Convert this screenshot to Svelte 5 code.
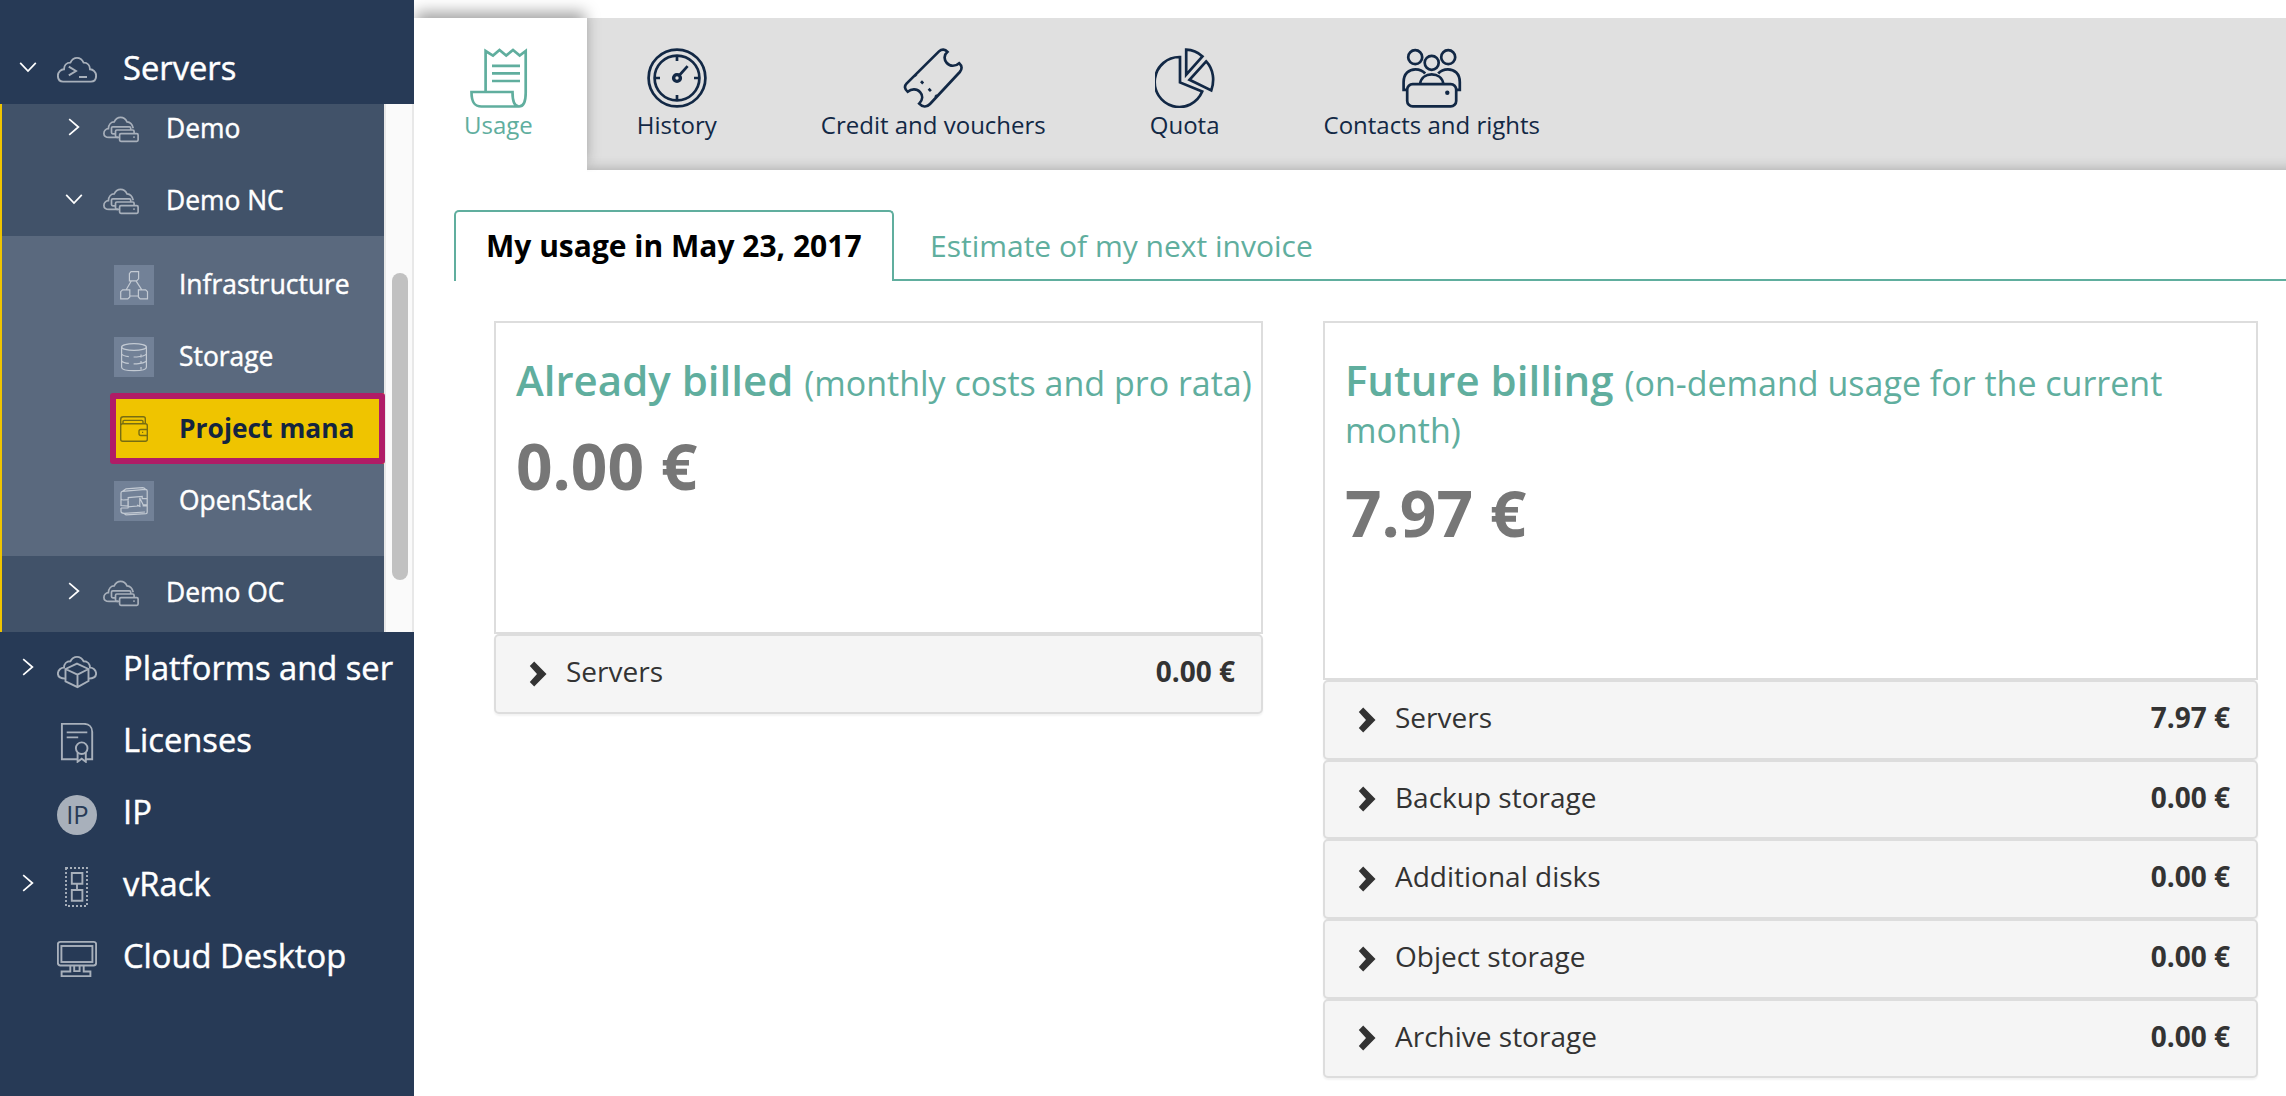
<script>
  const top = [{ label: 'Servers', icon: 'terminal', arrow: 'down' }];
  const bottom = [
    { label: 'Platforms and ser', icon: 'platform', arrow: 'right' },
    { label: 'Licenses', icon: 'license' },
    { label: 'IP', icon: 'ip' },
    { label: 'vRack', icon: 'vrack', arrow: 'right' },
    { label: 'Cloud Desktop', icon: 'desktop' }
  ];
  const before = [
    { label: 'Demo', arrow: 'right' },
    { label: 'Demo NC', arrow: 'down' }
  ];
  const after = [{ label: 'Demo OC', arrow: 'right' }];
  const project = [
    { label: 'Infrastructure', icon: 'infra' },
    { label: 'Storage', icon: 'storage' },
    { label: 'Project mana', icon: 'wallet', active: true },
    { label: 'OpenStack', icon: 'openstack' }
  ];
  const tools = [
    { label: 'Usage', icon: 'usage', active: true },
    { label: 'History', icon: 'history' },
    { label: 'Credit and vouchers', icon: 'ticket' },
    { label: 'Quota', icon: 'quota' },
    { label: 'Contacts and rights', icon: 'contacts' }
  ];
  const cards = [
    {
      title: 'Already billed', note: '(monthly costs and pro rata)', total: '0.00 €', size: 'narrow',
      rows: [['Servers', '0.00 €']]
    },
    {
      title: 'Future billing', note: '(on-demand usage for the current month)', total: '7.97 €', size: 'wide',
      rows: [
        ['Servers', '7.97 €'],
        ['Backup storage', '0.00 €'],
        ['Additional disks', '0.00 €'],
        ['Object storage', '0.00 €'],
        ['Archive storage', '0.00 €']
      ]
    }
  ];
</script>

{#snippet arrow(dir)}
  <svg class="arrow" viewBox="0 0 18 18">
    {#if dir === 'down'}
      <path d="M1.2 4.8 9 13 16.8 4.8" />
    {:else if dir === 'right'}
      <path d="M4.2 1.2 13.4 9 4.2 16.8" />
    {/if}
  </svg>
{/snippet}

{#snippet mainRow(item)}
  <div class="row main-row">
    {@render arrow(item.arrow)}
    <svg class="icon" viewBox="0 0 40 40">
      {#if item.icon === 'terminal'}
        <path d="M6 30.6C2.6 30.6.9 28 .9 24.8.9 21 4 18.2 7 18.2 7 14.6 9.4 11.6 13.4 11.6 15 8.4 17.4 6.9 20 6.9s5 1.5 6.6 4.7c4 0 6.4 3 6.4 6.6 3 0 6.1 2.8 6.1 6.6 0 3.2-1.7 5.8-5.1 5.8z" />
        <path d="M11.8 15.6 19 20l-7.2 4.4M22 26h8" />
      {:else if item.icon === 'platform'}
        <path d="M8.5 27.6C4 27.6.9 25.8.9 22.6.9 19 4 16.6 7 16.6 7 13 9.4 10.2 13.4 10.2 15 7.2 17.4 5.9 20 5.9s5 1.3 6.6 4.3c4 0 6.4 2.8 6.4 6.4 3 0 6.1 2.4 6.1 6 0 3.2-3.1 5-7.6 5" />
        <path d="M20 12.6 31.5 18v12l-11 6.2-12-5.8V18zM8.5 18l12 5.6 11-5.6M20.5 23.6v12.6" />
      {:else if item.icon === 'license'}
        <path d="M20.5 36.2H4.9V.9H27c5 0 8.2 3.2 8.2 8v27.3H29M9.7 9.4h20.6M9.7 14.4h11.5" />
        <circle cx="24.7" cy="25.2" r="5.8" />
        <path d="M20.6 29.6v9.2l4.1-3 4.1 3v-9.2" />
      {:else if item.icon === 'ip'}
        <circle class="disc" cx="20" cy="20" r="20" />
        <text x="20.4" y="29.3">IP</text>
      {:else if item.icon === 'vrack'}
        <rect class="dots" x="9" y="1" width="21" height="38" />
        <path d="M14.8 6h10.6v10.8H14.8zM14.8 23h10.6v10.8H14.8zM20 16.8V23" />
      {:else if item.icon === 'desktop'}
        <rect x=".9" y="2.9" width="38.2" height="23.6" rx="2.4" />
        <rect x="4.4" y="7" width="31" height="16" />
        <path d="M13.3 26.5v6H4.6v4.6h28.8v-4.6h-6.7v-6M17.2 26.5v5.6h5.4v-5.6" />
      {/if}
    </svg>
    <span>{item.label}</span>
  </div>
{/snippet}

{#snippet subRow(item)}
  <div class="row sub-row">
    {@render arrow(item.arrow)}
    <svg class="icon" viewBox="0 0 36 36">
      <path d="M15 25.4H6C2.6 25.4.9 23.8.9 21.4c0-2.8 2.2-4.6 4.5-4.8C5.6 12.8 8 9.9 11.2 9.9 12.7 6.8 15 5.4 17.6 5.4s5 1.4 6.4 4.5c3.2.2 5.4 2.7 6.2 6.4" />
      <path d="M12 21.8H9.8q-1.3 0-1.3-1.3v-4.4q0-1.3 1.3-1.3h16.6q1.3 0 1.3 1.3v1.5M16 25.4h-2.2q-1.3 0-1.3-1.3v-4.7q0-1.4 1.3-1.4h16q1.3 0 1.3 1.4v2" />
      <rect x="16.6" y="21.6" width="18.5" height="7.8" rx="1.3" />
      <path d="M30.3 25.2h1.4" />
    </svg>
    <span>{item.label}</span>
  </div>
{/snippet}

<div class="page">
  <aside>
    {#each top as item}{@render mainRow(item)}{/each}
    <div class="scroller">
      <div class="tree">
        <div class="before">
          {#each before as item}{@render subRow(item)}{/each}
        </div>
        <div class="project">
          {#each project as item}
            <div class="leaf" class:active={item.active}>
              <svg class="tile" viewBox="0 0 40 40">
                {#if item.icon === 'infra'}
                  <path d="M17 6.6h7.6v7.2l-2 2h-7.2V8.6zM8.6 24.8h7.2V32l-2 1.9H6.7v-7.2zM24.4 24.8h7.2l1.9 1.9v7.2h-7.4L24.4 32zM17.4 15.8l-5.2 9M22 15.8l5.8 9M15.8 31h8.6" />
                {:else if item.icon === 'storage'}
                  <ellipse cx="20" cy="10" rx="12.4" ry="3.4" />
                  <path d="M7.6 10v20.2c0 4.6 24.8 4.6 24.8 0V10M7.6 17c1 1.4 4 2.2 7.2 2.6M19.6 20h3.2c4-.3 8-1.2 9.6-2.8M7.6 23.8c1 1.4 4 2.2 7.2 2.6M19.6 26.8h3.2c4-.3 8-1.2 9.6-2.8M27 17.4v3M27 24v3M27 30v2.6" />
                {:else if item.icon === 'wallet'}
                  <path d="M6.7 16v-5.6q0-2.6 2.6-2.6h20q2 0 2 2v4.6M9 14.6v-2q0-1.2 1.2-1.2h17.6q1.2 0 1.2 1.2v2" />
                  <path d="M33.3 20.5v-3.8q0-2-2-2H8.7q-2 0-2 2v13.6q0 2 2 2h22.6q2 0 2-2v-3.8M33.3 20.5h-6.5q-1.8 0-1.8 1.8v2.2q0 2 1.8 2h6.5zM28 23.4h1.2" />
                {:else}
                  <path d="M7 15.5V12q0-1.4 1.4-1.6l23-2q1.8 0 1.8 1.6v7.6h-5v-2.2l-14 1.2v2l-5 .4q-2.2 0-2.2-1.5zM8.5 10.2 12 7.8 28.6 6.6q1.6 0 3 1.8M7 18v6.5l7 .6v-7M14.2 17.2v8.6l11.6-1v-8M25.8 17l3.4 6.8h4v-6M7 27v3.5q0 1.5 3 1.9l2 1.4 20-1.2q1.2-.1 1.2-1.4v-6.4h-4.6M7 27h7l.6-1.4M10 32.4l21-1.4M23 24l3.5 1.6" />
                {/if}
              </svg>
              <span>{item.label}</span>
            </div>
          {/each}
        </div>
        {#each after as item}{@render subRow(item)}{/each}
      </div>
      <div class="track"><div class="thumb"></div></div>
    </div>
    {#each bottom as item}{@render mainRow(item)}{/each}
  </aside>

  <main>
    <nav>
      {#each tools as t}
        <div class="tool" class:active={t.active}>
          <svg viewBox="0 0 60 60">
            {#if t.icon === 'usage'}
              <path d="M17.6 43.5V3l7.4 4.6L31.500 2l6.700 5.600L45 2l6.700 5.600L57.700 3v42c0 8.500-2.600 13.500-6.700 13.500s-6.500-5-6.500-14.500h-41C3.500 53 5.500 58.500 13.500 58.500H51M24 17.800h28M24 25.400h28M24 33h28" />
            {:else if t.icon === 'history'}
              <circle cx="30" cy="30" r="28.4" />
              <circle cx="30" cy="30" r="22.4" />
              <circle class="hub" cx="30" cy="30" r="3.4" />
              <path d="M32.6 27 40.6 18.2M30 8v5M30 47v5M8 30h5M47 30h5" />
            {:else if t.icon === 'ticket'}
              <path d="M36 3.4C38.8.7 42 1 44.5 3.8 40.8 7 40.8 11.8 43.8 15c3.2 3.6 8.6 3.6 12.4.2 3 2.6 3 6 .6 8.8L27 56c-3.4 3.6-7.5 3.2-10.8-.4 3.6-3.6 3.8-8.2.9-11.4-3.4-3.8-8.6-3.6-12.4-.5C1.5 41.2 1.2 38 3.5 35.6zM11.5 26l2 2M18 33.2l2.2 2.3M25.6 40.8l2.3 2.3M32.2 47.2l1.800 1.800" />
            {:else if t.icon === 'quota'}
              <path d="M25 9A24.7 25 0 1 0 47.2 43.6L25 34.4zM31.2 1.6v25L47.5 8.4Q40.5 1.8 31.2 1.6zM51.2 13.4 34.5 31.8 56.3 42.4C59.6 33 58.8 21.5 51.2 13.4z" />
            {:else}
              <circle cx="13.2" cy="9.2" r="7" />
              <circle cx="46.2" cy="9.2" r="7" />
              <circle cx="29.7" cy="14.8" r="7" />
              <path d="M5.5 41.8H1.6V34C1.6 25.5 7 21.3 13.5 21.3c4.2 0 7.3 1.4 9.7 4.2M53.9 41.8h3.9V34c0-8.5-5.4-12.7-11.9-12.7-4.2 0-7.3 1.4-9.7 4.2M18 36c1-6.4 6-9.6 11.7-9.6S40.4 29.6 41.4 36" />
              <rect x="5.2" y="36.2" width="49" height="22.2" rx="5.5" />
              <circle class="dot" cx="45.3" cy="44.8" r="2.2" />
            {/if}
          </svg>
          <span>{t.label}</span>
        </div>
      {/each}
    </nav>

    <div class="tabs">
      <div class="tab current">My usage in May 23, 2017</div>
      <div class="tab">Estimate of my next invoice</div>
    </div>

    <div class="cards">
      {#each cards as c}
        <section class={c.size}>
          <div class="summary">
            <h2>{c.title} <small>{c.note}</small></h2>
            <p>{c.total}</p>
          </div>
          {#each c.rows as [name, price]}
            <div class="line">
              <svg viewBox="0 0 18 26"><path d="M5.2.5 17.5 13 5.2 25.5.8 21 8 13 .8 5z" /></svg>
              <span>{name}</span>
              <b>{price}</b>
            </div>
          {/each}
        </section>
      {/each}
    </div>
  </main>
</div>

<style>
  :global(body) { background: #fff; overflow: hidden; }
  .page {
    display: flex;
    height: 1096px;
    overflow: hidden;
    font-family: 'Open Sans', 'Noto Sans', sans-serif;
  }
  svg { display: block; flex: none; fill: none; }

  aside {
    position: relative;
    z-index: 2;
    flex: none;
    width: 414px;
    padding-top: 32px;
    box-sizing: border-box;
    background: #273a56;
    color: #fff;
    white-space: nowrap;
    overflow: hidden;
  }
  aside span { -webkit-text-stroke: .45px currentColor; }
  .row { display: flex; height: 72px; }
  .arrow { width: 18px; height: 18px; stroke: #fff; stroke-width: 1.7; }
  .row .icon { stroke: #a8b0bb; stroke-width: 1.9; }
  .main-row { padding-left: 19px; font-size: 32.7px; line-height: 71px; }
  .main-row .arrow { margin: 26px 20px 0 0; }
  .main-row .icon { width: 40px; height: 40px; margin: 19px 26px 0 0; }
  .icon .disc { fill: #a8b0bb; stroke: none; }
  .icon text { fill: #273a56; stroke: none; font-size: 25.5px; text-anchor: middle; }
  .icon .dots { stroke-dasharray: 2 2; }

  .scroller { display: flex; height: 528px; border-left: 2px solid #efc400; background: #fafafa; }
  .tree { width: 382px; background: #415269; overflow-x: visible; overflow-y: clip; flex: none; }
  .before { margin-top: -12px; }
  .sub-row { padding-left: 63px; font-size: 26.4px; line-height: 72px; }
  .sub-row .arrow { margin: 26px 20px 0 0; }
  .sub-row .icon { width: 36px; height: 36px; margin: 20px 27px 0 0; stroke-width: 1.7; }
  .project { height: 320px; padding: 13px 0 0 112px; box-sizing: border-box; background: #5a697e; }
  .leaf { display: flex; height: 72px; gap: 25px; font-size: 26.4px; line-height: 70px; }
  .tile { width: 40px; height: 40px; margin-top: 16px; background: #728197; stroke: #c3cad3; stroke-width: 1.2; }
  .leaf.active {
    position: relative;
    z-index: 1;
    height: 71px;
    margin-bottom: 1px;
    background: #efc400;
    color: #14243f;
    font-weight: 700;
  }
  .leaf.active span { -webkit-text-stroke: 0; }
  .leaf.active::after {
    content: '';
    position: absolute;
    inset: 0 -1px 0 -4px;
    border: 6px solid #b01c66;
    border-radius: 3px;
  }
  .leaf.active .tile { background: none; stroke: #776d12; stroke-width: 1.4; }
  .track {
    width: 30px;
    padding: 169px 4px 0 6px;
    box-sizing: border-box;
    border: solid #e8e8e8;
    border-width: 0 2px;
  }
  .thumb { height: 307px; border-radius: 8px; background: #c1c1c1; }

  main { flex: 1; min-width: 0; }
  nav {
    display: flex;
    height: 152px;
    margin-top: 18px;
    background: #e0e0e0;
    box-shadow: inset 0 -14px 14px -14px rgba(0, 0, 0, .28);
  }
  .tool {
    display: flex;
    flex-direction: column;
    align-items: center;
    padding: 30px 52px 0;
    color: #122845;
    font-size: 24px;
    line-height: 33px;
    white-space: nowrap;
  }
  .tool svg { width: 60px; height: 60px; stroke: currentColor; stroke-width: 2.7; }
  .tool .dot { fill: currentColor; stroke: none; }
  .tool .hub { stroke-width: 3.4; }
  .tool.active {
    height: 124px;
    padding: 30px 54px 0 50px;
    background: #fff;
    color: #60ae9e;
    box-shadow: 0 -8px 14px -2px rgba(0, 0, 0, .36);
    clip-path: inset(-18px -16px 0 0);
  }
  .tool.active + .tool { padding-left: 50px; }

  .tabs { display: flex; margin: 40px 0 0 40px; }
  .tabs::after { content: ''; flex: 1; border-bottom: 2px solid #60ae9e; }
  .tab {
    height: 71px;
    padding: 2px 0 0 36px;
    box-sizing: border-box;
    border-bottom: 2px solid #60ae9e;
    color: #60ae9e;
    font-size: 30px;
    line-height: 68px;
    white-space: nowrap;
  }
  .tab.current {
    width: 440px;
    padding: 0 0 0 30px;
    border: 2px solid #60ae9e;
    border-bottom: 0;
    border-radius: 5px 5px 0 0;
    color: #000;
    font-weight: 700;
  }

  .cards { display: flex; align-items: flex-start; gap: 60px; margin: 40px 0 0 80px; }
  .narrow { width: 769px; }
  .wide { width: 935px; }
  .summary { height: 313px; padding: 33px 0 0 20px; box-sizing: border-box; border: 2px solid #ddd; }
  .wide .summary { height: 359px; padding-right: 20px; }
  h2 { margin: 0; color: #60ae9e; font-size: 42px; font-weight: 600; line-height: 47px; }
  .narrow h2 { white-space: nowrap; }
  small { font-size: 34px; font-weight: 400; line-height: 1; }
  p { margin: 28px 0 0; color: #777; font-size: 64px; font-weight: 700; line-height: 70px; }
  .line {
    display: flex;
    height: 79.7px;
    padding: 0 26px 0 33px;
    box-sizing: border-box;
    border: 2px solid #ddd;
    border-radius: 5px;
    background: #f5f5f5;
    box-shadow: 0 2px 2px rgba(0, 0, 0, .05);
    color: #333;
    font-size: 28px;
    line-height: 71px;
  }
  .line svg { width: 18px; height: 26px; margin: 24.5px 19px 0 0; fill: #333; }
  .line b { margin-left: auto; }
</style>
